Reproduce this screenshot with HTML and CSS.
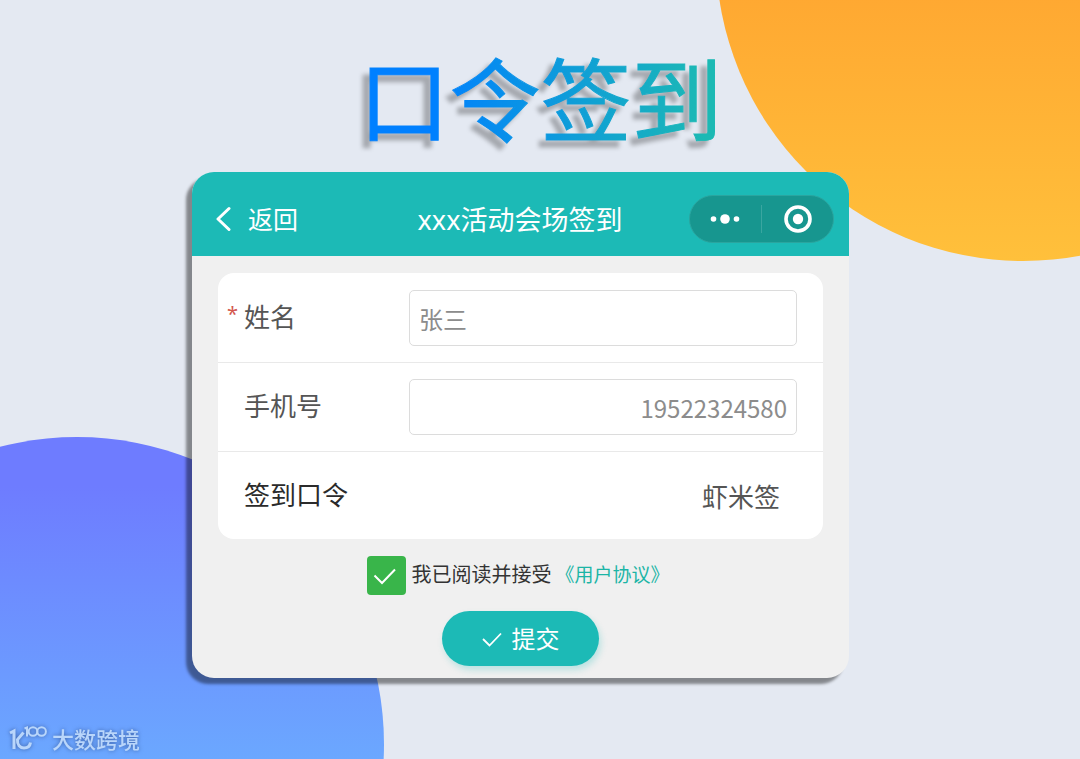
FILE: index.html
```html
<!DOCTYPE html>
<html lang="zh-CN">
<head>
<meta charset="utf-8">
<meta name="viewport" content="width=device-width, initial-scale=1">
<title>口令签到</title>
<link rel="stylesheet" href="styles.css">
</head>
<body>
<div class="page">
  <div class="circle circle-orange"></div>
  <div class="circle circle-blue"></div>
  <h1 class="title"><span class="title-text">口令签到</span></h1>
  <main class="card">
    <header class="bar">
      <button class="back" type="button">
        <svg width="16" height="26" viewBox="0 0 16 26" fill="none" stroke="currentColor" stroke-width="3" stroke-linecap="round" stroke-linejoin="round" aria-hidden="true"><path d="M13 2.500 2 13 13 23.500"/></svg>
        <span class="back-text">返回</span>
      </button>
      <h2 class="bar-title">xxx活动会场签到</h2>
      <div class="capsule">
        <button class="capsule-btn" type="button" aria-label="更多">
          <svg width="32" height="12" viewBox="0 0 32 12" fill="currentColor" aria-hidden="true"><circle cx="3.500" cy="6" r="2.800"/><circle cx="15" cy="6" r="4.800"/><circle cx="26.500" cy="6" r="2.800"/></svg>
        </button>
        <button class="capsule-btn" type="button" aria-label="关闭">
          <svg width="28" height="28" viewBox="0 0 28 28" aria-hidden="true"><circle cx="14" cy="14" r="12" fill="none" stroke="currentColor" stroke-width="3.600"/><circle cx="14" cy="14" r="5.200" fill="currentColor"/></svg>
        </button>
      </div>
    </header>
    <form class="form">
      <div class="panel">
        <div class="row">
          <label class="label required" for="name">姓名</label>
          <input class="field" id="name" type="text" value="张三">
        </div>
        <div class="row">
          <label class="label" for="phone">手机号</label>
          <input class="field field-end" id="phone" type="tel" value="19522324580">
        </div>
        <div class="row">
          <label class="label label-strong" for="code">签到口令</label>
          <input class="field field-plain" id="code" type="text" value="虾米签">
        </div>
      </div>
      <div class="agree">
        <span class="check">
          <input class="check-box" id="agree" type="checkbox" checked>
          <svg class="check-mark" viewBox="0 0 39 39" fill="none" stroke="#fff" stroke-width="2" aria-hidden="true"><path d="M7.500 19.500 15 27 28 13.500"/></svg>
        </span>
        <label class="agree-label" for="agree">我已阅读并接受</label>
        <a class="agree-link" href="#">《用户协议》</a>
      </div>
      <button class="submit" type="submit">
        <svg width="20" height="16" viewBox="0 0 20 16" fill="none" stroke="currentColor" stroke-width="1.800" aria-hidden="true"><path d="M1 8 7.500 14.500 19 2.500"/></svg>
        <span class="submit-text">提交</span>
      </button>
    </form>
  </main>
  <div class="brand">
    <svg width="40" height="28" viewBox="0 0 40 28" fill="none" stroke="currentColor" stroke-width="3" aria-hidden="true"><path d="M1 9 5 7V25M14.500 8.500 8.500 15.500C8 21 11 24 15 24 18.500 24 21 22 21.500 18.500"/><path stroke-width="2" d="M15.500 4.500 18 3.500V12.500"/><circle cx="24" cy="7.500" r="4.300" stroke-width="2"/><circle cx="32.600" cy="7.500" r="4.300" stroke-width="2"/></svg>
    <span>大数跨境</span>
  </div>
</div>
</body>
</html>
```

FILE: styles.css
```css
* { box-sizing: border-box; }

body {
  margin: 0;
  font-family: "Noto Sans CJK SC", sans-serif;
  color: #333;
}

button, input { font: inherit; }

button {
  border: 0;
  padding: 0;
  background: none;
  color: #fff;
  cursor: pointer;
}

svg { flex: none; }

.page {
  position: relative;
  display: flex;
  flex-direction: column;
  min-height: 100vh;
  padding: 47px 231px 0 192px;
  overflow: hidden;
  background: #e4e9f2;
}

.circle {
  position: absolute;
  width: 614px;
  height: 614px;
  border-radius: 50%;
}

.circle-orange {
  top: -353px;
  right: -250px;
  background: linear-gradient(#ff9f2e 40%, #ffc03b);
}

.circle-blue {
  top: 437px;
  left: -230px;
  background: linear-gradient(#6e7cff 8%, #6ba9ff 54%);
}

.title {
  margin: 0;
  padding-left: 40px;
  font-size: 91px;
  font-weight: 400;
  line-height: 96px;
  text-align: center;
  white-space: nowrap;
  filter: drop-shadow(-7px 7px 2px rgba(0, 0, 0, 0.28));
}

.title-text {
  background: linear-gradient(90deg, #0080ff 20%, #1cb9b4 95%);
  background-clip: text;
  -webkit-background-clip: text;
  -webkit-text-stroke: 1px transparent;
  color: transparent;
}

.card {
  position: relative;
  margin-top: 29px;
  border-radius: 22px;
  background: #f0f0f0;
  box-shadow: -6px 6px 3px rgba(0, 0, 0, 0.42);
}

.bar {
  display: grid;
  grid-template-columns: 1fr auto 1fr;
  align-items: center;
  height: 84px;
  padding: 10px 15px 0 24px;
  border-radius: 22px 22px 0 0;
  background: #1cbab6;
  color: #fff;
}

.back {
  display: flex;
  align-items: center;
  gap: 16px;
  font-size: 25px;
}

.back-text, .submit-text { padding-bottom: 3px; }

.bar-title {
  margin: 0 10px 0 0;
  padding-top: 2px;
  font-family: "Noto Sans", "Noto Sans CJK SC", sans-serif;
  font-size: 27px;
  font-weight: 400;
  line-height: 40px;
}

.capsule {
  display: flex;
  justify-self: end;
  width: 145px;
  height: 48px;
  border: 1px solid #2aa59f;
  border-radius: 24px;
  background: #17968f;
}

.capsule-btn {
  display: flex;
  flex: 1;
  align-items: center;
  justify-content: center;
}

.capsule-btn + .capsule-btn {
  margin: 9px 0;
  border-left: 1px solid #3aa6a0;
}

.form {
  display: flex;
  flex-direction: column;
  align-items: center;
  padding: 17px 26px 12px;
}

.panel {
  width: 100%;
  padding-top: 1px;
  border-radius: 16px;
  background: #fff;
}

.row {
  display: flex;
  align-items: center;
  padding: 16px 26px;
}

.row + .row { border-top: 1px solid #e9e9e9; }

.label {
  position: relative;
  flex: none;
  width: 165px;
  padding-bottom: 4px;
  color: #555;
  font-size: 26px;
  line-height: 36px;
}

.label-strong { color: #2b2b2b; }

.required::before {
  content: "*";
  position: absolute;
  left: -17px;
  color: #d3574e;
  font-family: "Noto Sans", sans-serif;
  font-size: 20px;
  line-height: 32px;
}

.field {
  flex: 1;
  min-width: 0;
  height: 56px;
  padding: 0 9px;
  border: 1px solid #dcdcdc;
  border-radius: 5px;
  background: #fff;
  color: #8c8c8c;
  font-size: 24px;
}

.field-end { text-align: right; }

.field-plain {
  height: 55px;
  padding: 0 17px 1px;
  border: 0;
  color: #555;
  font-size: 26px;
  text-align: right;
}

.agree {
  display: flex;
  align-items: center;
  margin: 17px 4px 0 0;
  font-size: 20px;
  line-height: 28px;
}

.check {
  position: relative;
  display: flex;
  margin-right: 5px;
}

.check-box {
  appearance: none;
  width: 39px;
  height: 39px;
  margin: 0;
  border-radius: 4px;
  background: #fff;
}

.check-box:checked { background: #39b54a; }

.check-mark {
  position: absolute;
  inset: 0;
  pointer-events: none;
}

.agree-label, .agree-link { padding-bottom: 4px; }

.agree-link {
  margin-left: 4px;
  color: #1cb5a6;
  font-size: 19px;
  text-decoration: none;
}

.submit {
  display: flex;
  align-items: center;
  justify-content: center;
  gap: 10px;
  width: 157px;
  height: 55px;
  margin-top: 16px;
  border-radius: 28px;
  background: #1cbab6;
  box-shadow: 2px 4px 6px rgba(28, 186, 182, 0.25);
  font-size: 24px;
}

.brand {
  position: absolute;
  bottom: 5px;
  left: 9px;
  display: flex;
  align-items: center;
  gap: 3px;
  color: #b9d6fb;
  font-size: 22px;
  font-weight: 500;
  line-height: 32px;
  filter: drop-shadow(0 0 2px rgba(40, 70, 130, 0.7));
}
```
